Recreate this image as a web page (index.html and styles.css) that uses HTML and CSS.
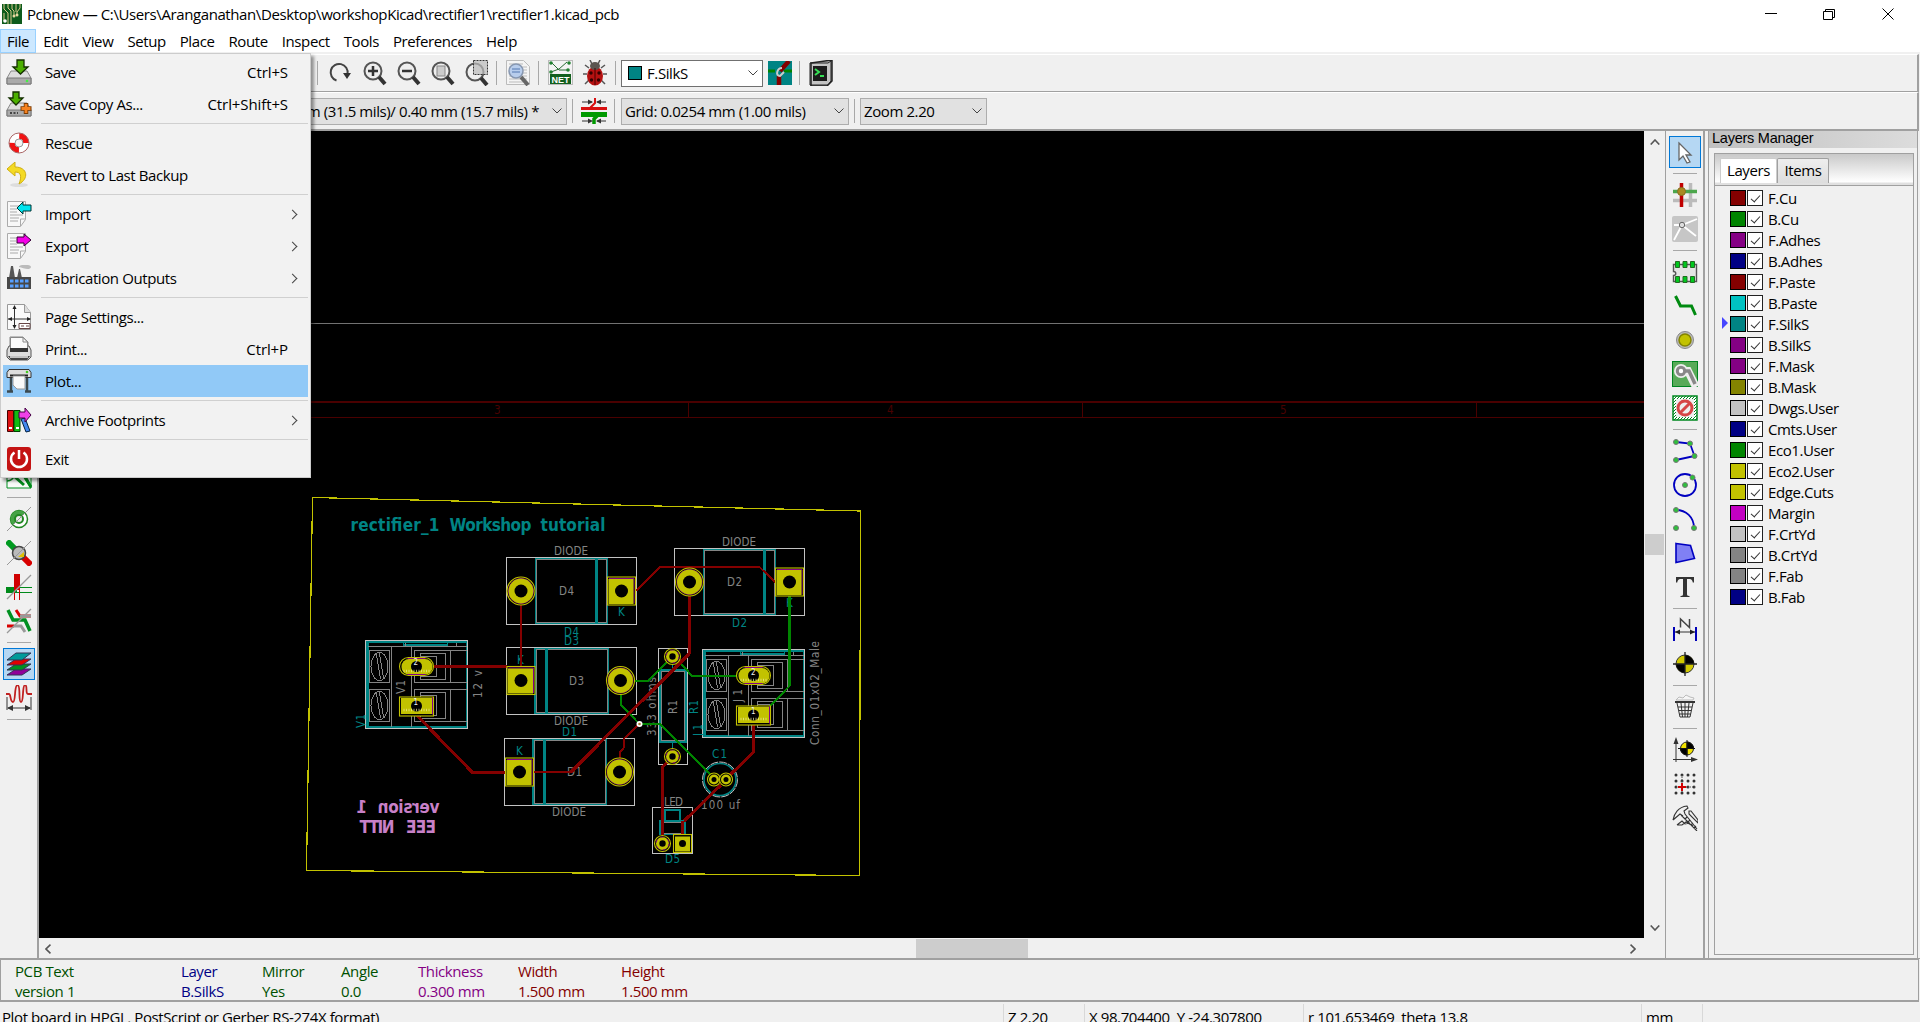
FILE: index.html
```html
<!DOCTYPE html>
<html lang="en">
<head>
<meta charset="utf-8">
<title>Pcbnew</title>
<link rel="stylesheet" href="styles.css">
</head>
<body>
<div class="window">
  <header class="titlebar">
    <svg class="app-icon" viewBox="0 0 20 20"><rect width="20" height="20" fill="#0d5b1c"/><path d="M2 0v5l4 4v11M6 0v4l3 3v13M10 0v5l2 2v4M14 0v8M18 0v4l-3 4v3M2 9v8" stroke="#d9c98c" fill="none"/><circle cx="3" cy="17" r="1.8" fill="#fff"/><circle cx="12" cy="12" r="1.5" fill="#e8d9a0"/><circle cx="15" cy="11" r="1.5" fill="#e8d9a0"/></svg>
    <span class="title-text">Pcbnew — C:\Users\Aranganathan\Desktop\workshopKicad\rectifier1\rectifier1.kicad_pcb</span>
    <svg class="win-controls" viewBox="0 0 140 28"><path d="M0 13.5h12M58.500 11.500h9v8h-9zM60.500 11.500v-2h9v8h-2M117.500 8.500l11 11M128.500 8.500l-11 11" stroke="#000" fill="none"/></svg>
  </header>
  <nav class="menubar">
    <span class="mb-item active">File</span><span class="mb-item">Edit</span><span class="mb-item">View</span><span class="mb-item">Setup</span><span class="mb-item">Place</span><span class="mb-item">Route</span><span class="mb-item">Inspect</span><span class="mb-item">Tools</span><span class="mb-item">Preferences</span><span class="mb-item">Help</span>
  </nav>

  <div class="toolbar top-main">
    <i class="vsep"></i>
    <svg class="ti" viewBox="0 0 26 26"><path d="M9.500 20.500A8.500 8.500 0 1 1 20.500 14" fill="none" stroke="#444" stroke-width="2"/><path d="M16 13h8l-4 6z" fill="#333"/></svg>
    <svg class="ti m9" viewBox="0 0 26 26"><circle cx="11" cy="11" r="8.500" fill="#eee" stroke="#555" stroke-width="2"/><path d="M17 17l6 7" stroke="#333" stroke-width="4"/><path d="M11 6v10M6 11h10" stroke="#333" stroke-width="2.500"/></svg>
    <svg class="ti m8" viewBox="0 0 26 26"><circle cx="11" cy="11" r="8.500" fill="#eee" stroke="#555" stroke-width="2"/><path d="M17 17l6 7" stroke="#333" stroke-width="4"/><path d="M6 11h10" stroke="#333" stroke-width="2.500"/></svg>
    <svg class="ti m8" viewBox="0 0 26 26"><circle cx="11" cy="11" r="8.500" fill="#eee" stroke="#555" stroke-width="2"/><path d="M17 17l6 7" stroke="#333" stroke-width="4"/><rect x="7" y="6" width="8" height="10" fill="#ccc" stroke="#888"/></svg>
    <svg class="ti m9" viewBox="0 0 26 26"><circle cx="10" cy="12" r="8.500" fill="#eee" stroke="#555" stroke-width="2"/><path d="M16 18l6 7" stroke="#333" stroke-width="4"/><rect x="8.500" y=".5" width="14" height="14" fill="#bbb" fill-opacity=".7" stroke="#333" stroke-dasharray="2 1"/></svg>
    <i class="vsep m5"></i>
    <svg class="ti m8" viewBox="0 0 26 26"><path d="M1.500 .5h17l6 6v18h-23z" fill="#f4f4f4" stroke="#bbb"/><path d="M4 4h14M4 7h18M4 10h18M4 13h18M4 16h18M4 19h18M4 22h14" stroke="#bbb"/><circle cx="11" cy="11" r="7" fill="#b8cdec" stroke="#8797b0" stroke-width="1.500"/><path d="M7 9h8M7 12h8" stroke="#5277b0"/><path d="M16 17l7 8" stroke="#666" stroke-width="4"/></svg>
    <i class="vsep m7"></i>
    <svg class="ti m9" viewBox="0 0 26 26"><rect x=".5" y=".5" width="24" height="24" fill="#f3f3f3" stroke="#bbb"/><path d="M3 2l8 8h8M3 12l8-3 8-7" stroke="#286b32" fill="none"/><g fill="#208030"><circle cx="3" cy="3" r="1.800"/><circle cx="3" cy="12" r="1.800"/><circle cx="21" cy="3" r="1.800"/><circle cx="20" cy="10" r="1.800"/></g><rect x="2" y="14" width="21" height="10" fill="#12601e"/><text x="3.500" y="22.500" class="net-label" textLength="18">NET</text></svg>
    <svg class="ti m8" viewBox="0 0 26 26"><path d="M7 8l-4-3M19 8l4-3M5 14H1M21 14h4M7 20l-4 4M19 20l4 4M10 4L8 0M16 4l2-4" stroke="#555" stroke-width="1.500"/><ellipse cx="13" cy="16" rx="8" ry="9.500" fill="#b51111"/><ellipse cx="13" cy="6" rx="5" ry="4" fill="#5a5550"/><path d="M13 8v17" stroke="#400"/><g fill="#300"><circle cx="9" cy="13" r="1.700"/><circle cx="17" cy="13" r="1.700"/><circle cx="9.500" cy="20" r="1.700"/><circle cx="16.500" cy="20" r="1.700"/></g></svg>
    <i class="vsep m7"></i>
    <div class="combo light layer-combo"><i class="layer-chip"></i><span>F.SilkS</span><svg class="arrow" viewBox="0 0 10 6"><path d="M.5 .5L5 5 9.500 .5" fill="none" stroke="#444"/></svg></div>
    <svg class="ti layer-pair" viewBox="0 0 24 24"><rect width="24" height="24" fill="#008484"/><path d="M0 10h7M16 10h8" stroke="#008400" stroke-width="3"/><path d="M21 0l-9 10" stroke="#840000" stroke-width="4.500"/><path d="M11 15v9" stroke="#840000" stroke-width="4.500"/><path d="M14 7c-5 0-7 8-2 8l4-4" stroke="#ccc" stroke-width="2" fill="none"/></svg>
    <i class="vsep m7"></i>
    <svg class="ti m9" viewBox="0 0 26 26"><path d="M2 3l21-3v21l-5 5H2z" fill="#c4c4c4" stroke="#222" stroke-width="1.500"/><path d="M1 3h18l3-2v20l-3 4H1z" fill="none" stroke="#222"/><path d="M4 6h14v15H4z" fill="#1c1c1c"/><path d="M6 9l4 3-4 3M11 16h4" stroke="#36e055" fill="none" stroke-width="2"/></svg>
  </div>
  <div class="toolbar top-options">
    <div class="combo track-combo"><span>m (31.5 mils)/ 0.40 mm (15.7 mils) *</span><svg class="arrow" viewBox="0 0 10 6"><path d="M.5 .5L5 5 9.500 .5" fill="none" stroke="#444"/></svg></div>
    <i class="vsep m5"></i>
    <svg class="ti m8" viewBox="0 0 26 26"><path d="M0 10.500h26" stroke="#d81111" stroke-width="3"/><path d="M0 16.500h26" stroke="#009a00" stroke-width="5"/><path d="M14 0v5l-5 5" stroke="#d81111" fill="none" stroke-width="2"/><path d="M13 26v-5l4-4" stroke="#009a00" fill="none" stroke-width="3.500"/><path d="M1 4h10M25 4h-9M1 23h9M25 23h-9" stroke="#333"/><path d="M7 1.500l5 2.500-5 2.500zM20 1.500l-5 2.500 5 2.500zM7 20.500l5 2.500-5 2.500zM20 20.500l-5 2.500 5 2.500z" fill="#333"/></svg>
    <i class="vsep m7"></i>
    <div class="combo grid-combo"><span>Grid: 0.0254 mm (1.00 mils)</span><svg class="arrow" viewBox="0 0 10 6"><path d="M.5 .5L5 5 9.500 .5" fill="none" stroke="#444"/></svg></div>
    <i class="vsep m5"></i>
    <div class="combo zoom-combo"><span>Zoom 2.20</span><svg class="arrow" viewBox="0 0 10 6"><path d="M.5 .5L5 5 9.500 .5" fill="none" stroke="#444"/></svg></div>
  </div>

  <div class="workspace">
    <aside class="side-tools left-tools">
      <div class="tool"><svg viewBox="0 0 26 26"><path d="M1 1h24v24H1z" fill="#f8fbf8" stroke="#009020"/><path d="M1 18c5 0 7-4 8-7h7l9 14" stroke="#008a1a" stroke-width="1.500" fill="none"/><path d="M9 14l9 8M18 12l7 12" stroke="#008a1a" stroke-width="3"/></svg></div>
      <i class="hsep"></i>
      <div class="tool"><svg viewBox="0 0 26 26"><circle cx="13" cy="13" r="8.500" fill="#fff" stroke="#228822" stroke-width="1.500"/><path d="M4.500 13a8.500 8.500 0 0 1 14.500-6L7 19a8 8 0 0 1-2.500-6z" fill="#46a346"/><circle cx="13" cy="13" r="4" fill="#eee" stroke="#228822" stroke-width="2"/><path d="M1 25L25 1" stroke="#999"/></svg></div>
      <div class="tool"><svg viewBox="0 0 26 26"><path d="M1 1l9 9" stroke="#009a20" stroke-width="6"/><path d="M16 16l9 9" stroke="#d80000" stroke-width="6"/><circle cx="13" cy="13" r="6.500" fill="#bbb" stroke="#444" stroke-width="1.500"/><path d="M12 17l6-5v5z" fill="#e0c000"/><path d="M1 25L25 1" stroke="#999"/></svg></div>
      <div class="tool"><svg viewBox="0 0 26 26"><path d="M0 16h11" stroke="#008a1a" stroke-width="6"/><path d="M11 13.500h15M11 18.500h15" stroke="#008a1a"/><path d="M11 0v16" stroke="#d00000" stroke-width="6"/><path d="M8.500 16v10M13.500 16v10" stroke="#d00000"/><path d="M1 25L25 1" stroke="#999" stroke-width="1.300"/></svg></div>
      <div class="tool"><svg viewBox="0 0 26 26"><path d="M10 2l4 6h11M1 18h7" stroke="#d80000" stroke-width="3" fill="none"/><path d="M14 8h11M8 18h7l4 6" stroke="#999" stroke-width="3" fill="none"/><path d="M2 2l5 10h12l5 11" stroke="#009020" stroke-width="3.500" fill="none"/><path d="M1 25L25 1" stroke="#999" stroke-width="1.300"/></svg></div>
      <i class="hsep"></i>
      <div class="tool on"><svg viewBox="0 0 26 26"><g stroke="#335" stroke-width="1"><path d="M1 24l9-6h15l-9 6z" fill="#90009a"/><path d="M1 19l9-6h15l-9 6z" fill="#009020"/><path d="M1 14l9-6h15l-9 6z" fill="#e00000"/><path d="M1 9l9-7h15l-9 7z" fill="#009a9a"/></g></svg></div>
      <div class="tool"><svg viewBox="0 0 26 26"><path d="M0 9h3c2 0 1 8 4 8s1-17 4.500-17S12 17 15 17s1-17 4-17 0 9 3 9h4" stroke="#c02020" fill="none" stroke-width="1.800"/><path d="M1 12v13M25 12v13M2 23h22" stroke="#333"/><path d="M1 23l6-3v6zM25 23l-6-3v6z" fill="#333"/></svg></div>
      <i class="hsep"></i>
    </aside>

    <main class="editor">
      <svg class="board" viewBox="39 131 1605 807" width="1605" height="807">
        <defs>
          <g id="pad-round"><circle r="14" class="y-line"/><circle r="12.500" class="m-line"/><circle r="12.500" class="y"/><circle r="6.500"/></g>
          <g id="pad-square"><rect x="-14" y="-14" width="28" height="28" class="y-line"/><path d="M-12.500 -12.500h25v25" class="m-line"/><rect x="-13" y="-12" width="25" height="25" class="y"/><circle r="6.500"/></g>
          <g id="pad-small"><circle r="8" class="y-line"/><circle r="6.500" class="y"/><circle r="6.500" class="m-line dash"/><circle r="3.200"/></g>
          <g id="diode-a" class="crisp"><rect width="130" height="67" class="crt"/><rect x="29" y="1" width="72" height="65" class="silk"/><rect x="30" y="2" width="70" height="63" class="fab"/><path d="M90 1v65" class="silk bar"/></g>
          <g id="diode-b" class="crisp"><rect width="129.500" height="67" class="crt"/><rect x="28.500" y="1" width="73" height="65" class="silk"/><rect x="29.500" y="2" width="71" height="63" class="fab"/><path d="M40 1v65" class="silk bar"/></g>
          <g id="terminal" class="crisp">
            <rect width="102" height="88" class="crt"/>
            <path d="M1 86V1.500H101V86.500H1zM38 1.500v3h44v-3M2.500 86V2.500" class="silk"/>
            <path d="M2 6h99M26 6v80M46 6v80M4 10h20v32h-20zM4 49h20v32h-20zM101 10H49v32h52M101 49H49v32h52M55 13h25v26h-25zM55 52h25v26h-25zM55 16h16v20h-16zM55 55h16v20h-16zM85 10v32M85 49v32M11 14l4 25M14 13l4 25M11 53l4 25M14 52l4 25M40 2v4M91 2v4" class="fab"/>
            <ellipse cx="14" cy="26" rx="8.500" ry="14" class="fab"/><ellipse cx="14" cy="65" rx="8.500" ry="14" class="fab"/>
          </g>
          <g id="terminal-pads">
            <rect x="34" y="17" width="34" height="18" rx="9" class="y-line"/><rect x="36" y="18.500" width="31" height="15.500" rx="7.500" class="y"/><path d="M42 18h18M42 34h18" class="m-line"/><circle cx="51" cy="26" r="5.500"/>
            <rect x="34" y="56.500" width="34" height="19" class="y-line"/><rect x="35.500" y="57.500" width="31" height="16" class="y"/><path d="M67 57v17" class="m-line"/><circle cx="51" cy="65.500" r="5.500"/>
            <path d="M38 30.500h26M38 69.500h26" class="netmark"/>
          </g>
        </defs>

        <g class="crisp">
          <path d="M38 323.500H1644" stroke="#727272"/>
          <path d="M38 402H1644" stroke="#4a0000" stroke-width="2"/><path d="M38 417.500H1644M688.500 402v15M1082.500 402v15M1476.500 402v15" stroke="#4a0000" fill="none"/>
        </g>
        <g class="frame-no"><text x="494" y="414">3</text><text x="887" y="414">4</text><text x="1280" y="414">5</text></g>

        <path d="M312.500 497.500L860.500 511 859.500 875.500 306.500 870.500z" class="edge crisp"/>

        <use href="#diode-a" x="506.500" y="557.500"/><use href="#diode-a" x="674.500" y="548.500"/>
        <use href="#diode-b" x="506.500" y="647.500"/><use href="#diode-b" x="504.500" y="738.500"/>
        <use href="#terminal" x="365.500" y="640.500"/><use href="#terminal" x="702.500" y="649.500"/>
        <g class="crisp">
          <rect x="658.500" y="648.500" width="29" height="116" class="crt"/><rect x="660" y="670" width="26" height="72" class="silk"/><rect x="661.500" y="671.500" width="23" height="69" class="fab"/><path d="M672.500 664v6M672.500 742v7" class="silk"/>
          <rect x="652.500" y="807.500" width="40" height="46" class="crt"/><rect x="665" y="810" width="15" height="11" class="silk"/><rect x="660" y="821" width="25" height="13.500" class="silk"/><path d="M661 822.500h23M661 833h23" class="fab"/>
        </g>
        <circle cx="720" cy="779.500" r="16" class="silk"/><circle cx="720" cy="779.500" r="17.500" class="crt dash4"/>

        <g class="gray-t">
          <text x="554" y="554.500" textLength="34">DIODE</text><text x="722" y="545.500" textLength="34">DIODE</text><text x="554" y="725" textLength="34">DIODE</text><text x="552" y="816" textLength="34">DIODE</text>
          <text x="559" y="595" textLength="15">D4</text><text x="569" y="685" textLength="15">D3</text><text x="567" y="776" textLength="15">D1</text><text x="727" y="586" textLength="15">D2</text>
          <text x="664" y="806" textLength="19">LED</text><text x="701" y="809" textLength="39">100 uf</text>
          <text transform="translate(482 698) rotate(-90)" textLength="28">12 v</text><text transform="translate(404.500 694) rotate(-90)" textLength="14">V1</text><text transform="translate(741.500 702) rotate(-90)" textLength="13">J1</text>
          <text transform="translate(677 714) rotate(-90)" textLength="14">R1</text><text transform="translate(655.500 736) rotate(-90)" textLength="59">333 ohms</text><text transform="translate(818.500 745) rotate(-90)" textLength="104">Conn_01x02_Male</text>
        </g>
        <g class="teal-t">
          <text x="564" y="636" textLength="15">D4</text><text x="564" y="645" textLength="15">D3</text><text x="562" y="736" textLength="15">D1</text><text x="732" y="627" textLength="15">D2</text>
          <text x="618" y="616">K</text><text x="517" y="664">K</text><text x="516" y="755">K</text><text x="786" y="607">K</text><text x="712" y="758" textLength="15">C1</text><text x="665" y="863" textLength="15">D5</text>
          <text transform="translate(365 728) rotate(-90)" textLength="14">V1</text><text transform="translate(702 736) rotate(-90)" textLength="12">J1</text><text transform="translate(698 714) rotate(-90)" textLength="14">R1</text>
          <g class="headline"><text x="350.500" y="531" textLength="89">rectifier_1</text><text x="449.500" y="531" textLength="82">Workshop</text><text x="540.500" y="531" textLength="65">tutorial</text></g>
        </g>
        <g class="pink-t" transform="scale(-1 1)"><text x="-439.500" y="813" textLength="62">version</text><text x="-367" y="813">1</text><text x="-436" y="832.500" textLength="30">EEE</text><text x="-394.500" y="832.500" textLength="35">NITT</text></g>

        <g class="bcu crisp"><path d="M635 681H648L669 660M621 694v11l18.500 19H660L713 777M678 660L692 676H738M769 707L789.500 686"/><path d="M789.500 596V686" class="thick"/></g>
        <g class="fcu crisp"><path d="M521 603V668M533 772H571L689 655M636 591L660 567H759.500L776 583M619.500 758V753L623.500 748V739L639.500 724"/><path d="M434 666.500H507M415.500 714L472 772H507M571 772L689.500 653V595M753.500 723V752L728 777M721 785L684 821M670 759L662.500 767V835M682.500 821V834" class="thick"/></g>

        <use href="#pad-round" x="521" y="591"/><use href="#pad-square" x="621.500" y="591"/>
        <use href="#pad-square" x="521" y="680.500"/><use href="#pad-round" x="620.500" y="680.500"/>
        <use href="#pad-square" x="519.500" y="772"/><use href="#pad-round" x="619.500" y="772"/>
        <use href="#pad-round" x="689.500" y="582"/><use href="#pad-square" x="789.500" y="582"/>
        <use href="#terminal-pads" x="365.500" y="640.500"/><use href="#terminal-pads" x="702.500" y="649.500"/>
        <g class="pad-t"><text x="413.500" y="665">2</text><text x="413.500" y="705">1</text><text x="751" y="675">2</text><text x="751" y="714">1</text></g>
        <use href="#pad-small" x="672.500" y="656.500"/><use href="#pad-small" x="672.500" y="756.500"/>
        <use href="#pad-small" x="662.500" y="843.500"/>
        <rect x="673.500" y="834.500" width="18" height="18" class="y-line"/><rect x="675" y="836.500" width="15" height="15" class="y"/><circle cx="682.500" cy="843.500" r="3.500"/>
        <circle cx="714" cy="779.500" r="6.500" class="y-line"/><circle cx="726" cy="779.500" r="6.500" class="y-line"/><circle cx="714" cy="779.500" r="5" class="y"/><circle cx="726" cy="779.500" r="5" class="y"/><circle cx="714" cy="779.500" r="2.500"/><circle cx="726" cy="779.500" r="2.500"/>
        <circle cx="639.500" cy="724" r="3" fill="#fff"/><circle cx="639.500" cy="724" r="1.300" fill="#a87a30"/>
      </svg>
      <div class="vscroll"><svg viewBox="0 0 10 6"><path d="M.7 5.500L5 1l4.300 4.500" /></svg><i class="thumb"></i><svg viewBox="0 0 10 6"><path d="M.7 .5L5 5 9.300 .5"/></svg></div>
      <div class="hscroll"><svg viewBox="0 0 6 10"><path d="M5.500 .7L1 5l4.500 4.300"/></svg><i class="thumb"></i><svg viewBox="0 0 6 10"><path d="M.5 .7L5 5 .5 9.300"/></svg></div>
    </main>

    <aside class="side-tools right-tools">
      <div class="tool on"><svg viewBox="0 0 26 26"><path d="M7 4l12 12h-5l4 7-3 1-4-7-4 4z" fill="#fff" stroke="#666" stroke-width="1.300"/></svg></div>
      <i class="hsep"></i>
      <div class="tool"><svg viewBox="0 0 26 26"><path d="M18.500 1v24M1 18.500h24" stroke="#bbb" stroke-width="3.500"/><path d="M1 9.500h24" stroke="#4ca64c" stroke-width="3.500"/><path d="M9.500 1v24" stroke="#c00000" stroke-width="3.500"/><circle cx="9.500" cy="9.500" r="4" fill="#a88a22" stroke="#876f22"/></svg></div>
      <div class="tool"><svg viewBox="0 0 26 26"><rect width="26" height="26" rx="2" fill="#c6c6c6"/><path d="M2 9l8 0L25 3M10 9L2 24M10 9l14 11" stroke="#fff" stroke-width="1.800" fill="none"/><circle cx="10" cy="9" r="2.700" fill="#ddd" stroke="#666"/></svg></div>
      <i class="hsep"></i>
      <div class="tool"><svg viewBox="0 0 26 26"><path d="M1.500 5.500h23v17h-23v-6c3 0 3-4 0-4z" fill="#e4e4e4" stroke="#555" stroke-width="1.400"/><path d="M3.500 2.500h4v6h-4zM11 2.500h4v6h-4zM18.500 2.500h4v6h-4zM3.500 17.500h4v6h-4zM11 17.500h4v6h-4zM18.500 17.500h4v6h-4z" fill="#00c81e" stroke="#226a22"/></svg></div>
      <div class="tool"><svg viewBox="0 0 26 26"><path d="M3.500 3l5 10h11l4 9" stroke="#008a10" stroke-width="3" fill="none"/></svg></div>
      <div class="tool"><svg viewBox="0 0 26 26"><circle cx="13" cy="13" r="8.500" fill="#bbb" stroke="#888"/><circle cx="13" cy="13" r="6" fill="#c2c200" stroke="#848400" stroke-width="1.500"/></svg></div>
      <div class="tool"><svg viewBox="0 0 26 26"><rect x=".5" y=".5" width="25" height="25" fill="#58aa58" stroke="#008420"/><path d="M9 10h7l8 16" stroke="#eee" stroke-width="8" fill="none"/><circle cx="9" cy="10" r="7" fill="#eee"/><path d="M13 10h4l6 13" stroke="#888" stroke-width="3.500" fill="none"/><circle cx="9" cy="10" r="3.700" fill="#fff" stroke="#888" stroke-width="3"/></svg></div>
      <div class="tool"><svg viewBox="0 0 26 26"><defs><pattern id="hatch" width="3" height="3" patternUnits="userSpaceOnUse"><path d="M0 3L3 0" stroke="#008820"/></pattern></defs><rect x="1" y="1" width="24" height="24" fill="#fff"/><rect x="1" y="1" width="24" height="24" fill="url(#hatch)" stroke="#008820" stroke-width="1.500"/><rect x="4" y="4" width="18" height="18" fill="#eee"/><circle cx="13" cy="13" r="7" fill="#eee" stroke="#d64646" stroke-width="3"/><path d="M18 8L8 18" stroke="#d64646" stroke-width="3"/></svg></div>
      <i class="hsep"></i>
      <div class="tool"><svg viewBox="0 0 26 26"><path d="M4 4l14 1.500 4.500 12.500L4 22" fill="none" stroke="#0000c0" stroke-width="1.800"/><g class="node"><circle cx="4" cy="4" r="2.500"/><circle cx="18" cy="5.500" r="2.500"/><circle cx="22.500" cy="18" r="2.500"/><circle cx="4" cy="22" r="2.500"/></g></svg></div>
      <div class="tool"><svg viewBox="0 0 26 26"><circle cx="13" cy="13" r="11" fill="none" stroke="#0000c0" stroke-width="1.800"/><g class="node"><circle cx="13" cy="13" r="2.500"/><circle cx="20.500" cy="5.500" r="2.500"/></g></svg></div>
      <div class="tool"><svg viewBox="0 0 26 26"><path d="M4 4c10 0 18 7 18 18" fill="none" stroke="#0000c0" stroke-width="1.800"/><g class="node"><circle cx="4" cy="4" r="2.500"/><circle cx="4" cy="22" r="2.500"/><circle cx="22" cy="22" r="2.500"/></g></svg></div>
      <div class="tool"><svg viewBox="0 0 26 26"><path d="M4 3.500l14.500 2L22.500 18.500 4 22.500z" fill="#8080f4" stroke="#0000c0" stroke-width="1.600"/></svg></div>
      <div class="tool"><svg viewBox="0 0 26 26"><path d="M4 3h18v5.500h-1.200q-.6-3.500-3-3.500H15v15.500q0 1.500 2.500 1.500v1h-9v-1q2.500 0 2.500-1.500V5H8.200q-2.400 0-3 3.500H4z" fill="#333"/></svg></div>
      <i class="hsep"></i>
      <div class="tool"><svg viewBox="0 0 26 26"><path d="M2 10v14M24 10v14" stroke="#0000b8" stroke-width="2"/><path d="M8.500 10.500V2l9 8.500V2" stroke="#444" fill="none" stroke-width="1.500"/><path d="M3 15h20" stroke="#333"/><path d="M3 15l5-2.500v5zM23 15l-5-2.500v5z" fill="#222"/></svg></div>
      <div class="tool"><svg viewBox="0 0 26 26"><circle cx="13" cy="13" r="9" fill="#d0c800" stroke="#333"/><path d="M13 13V4a9 9 0 0 1 9 9zM13 13v9a9 9 0 0 1-9-9z"/><path d="M13 1v24M1 13h24" stroke="#222" stroke-width="1.300"/></svg></div>
      <i class="hsep"></i>
      <div class="tool"><svg viewBox="0 0 26 26"><path d="M4 6l3-3 4 1 3-3 4 2 4 1-1 2z" fill="#f6f6f6" stroke="#bbb"/><path d="M3 8h20" stroke="#333" stroke-width="2"/><path d="M5 9l3 14h10l3-14M9 9l1.500 14M13 9v14M17 9l-1.500 14M6 13h14M7 16.500h12M7.500 20h11" stroke="#333" fill="none"/></svg></div>
      <i class="hsep"></i>
      <div class="tool"><svg viewBox="0 0 26 26"><path d="M4 25V3M1 22.500h23" stroke="#333"/><path d="M4 0l2.500 7h-5zM26 22.500l-7-2.500v5z" fill="#333"/><circle cx="15" cy="11.500" r="6.500" fill="#f0e000" stroke="#222"/><path d="M15 11.500V5a6.500 6.500 0 0 1 6.500 6.500zM15 11.500V18a6.500 6.500 0 0 1-6.500-6.500zM15 3v17M6 11.500h17" stroke="#111"/></svg></div>
      <div class="tool"><svg viewBox="0 0 26 26"><path d="M4 4h19M4 10h19M4 16h19M4 22h19" stroke="#333" stroke-width="3" stroke-linecap="round" stroke-dasharray="0 6"/><path d="M10 4v18M4 16h19" stroke="#555" stroke-dasharray="1 1"/><path d="M10 12v8M6 16h8" stroke="#d00000" stroke-width="2"/></svg></div>
      <div class="tool"><svg viewBox="0 0 26 26"><path d="M1 15C2 9 6 2 15 1l1 2-4 3 1 3 12 15M1 15l7-6 3 2M5 20l5-4 3 3 5-1M5 20h5l4-3 7 4M17 6l2 0 7 9v3l-9-9zM9 10l16 16M13 14l2-2M16 17l2-2M19 20l2-2M22 23l2-2" stroke="#333" stroke-width="1.100" fill="none"/></svg></div>
    </aside>

    <aside class="layers-pane">
      <div class="caption">Layers Manager</div>
      <div class="notebook">
        <div class="tabs"><span class="tab current">Layers</span><span class="tab">Items</span></div>
        <div class="layer-list">
          <div class="layer"><i class="sw" style="background:#840000"></i><b></b><span>F.Cu</span></div>
          <div class="layer"><i class="sw" style="background:#008400"></i><b></b><span>B.Cu</span></div>
          <div class="layer"><i class="sw" style="background:#840084"></i><b></b><span>F.Adhes</span></div>
          <div class="layer"><i class="sw" style="background:#000084"></i><b></b><span>B.Adhes</span></div>
          <div class="layer"><i class="sw" style="background:#840000"></i><b></b><span>F.Paste</span></div>
          <div class="layer"><i class="sw" style="background:#00c2c2"></i><b></b><span>B.Paste</span></div>
          <div class="layer selected"><i class="sw" style="background:#008484"></i><b></b><span>F.SilkS</span></div>
          <div class="layer"><i class="sw" style="background:#840084"></i><b></b><span>B.SilkS</span></div>
          <div class="layer"><i class="sw" style="background:#840084"></i><b></b><span>F.Mask</span></div>
          <div class="layer"><i class="sw" style="background:#848400"></i><b></b><span>B.Mask</span></div>
          <div class="layer"><i class="sw" style="background:#c2c2c2"></i><b></b><span>Dwgs.User</span></div>
          <div class="layer"><i class="sw" style="background:#000084"></i><b></b><span>Cmts.User</span></div>
          <div class="layer"><i class="sw" style="background:#008400"></i><b></b><span>Eco1.User</span></div>
          <div class="layer"><i class="sw" style="background:#c2c200"></i><b></b><span>Eco2.User</span></div>
          <div class="layer"><i class="sw" style="background:#c2c200"></i><b></b><span>Edge.Cuts</span></div>
          <div class="layer"><i class="sw" style="background:#c200c2"></i><b></b><span>Margin</span></div>
          <div class="layer"><i class="sw" style="background:#c2c2c2"></i><b></b><span>F.CrtYd</span></div>
          <div class="layer"><i class="sw" style="background:#848484"></i><b></b><span>B.CrtYd</span></div>
          <div class="layer"><i class="sw" style="background:#848484"></i><b></b><span>F.Fab</span></div>
          <div class="layer"><i class="sw" style="background:#000084"></i><b></b><span>B.Fab</span></div>
        </div>
      </div>
    </aside>
  </div>

  <section class="msg-panel">
    <div class="msg c-green"><span>PCB Text</span><span>version 1</span></div>
    <div class="msg c-blue"><span>Layer</span><span>B.SilkS</span></div>
    <div class="msg c-green"><span>Mirror</span><span>Yes</span></div>
    <div class="msg c-green"><span>Angle</span><span>0.0</span></div>
    <div class="msg c-purple"><span>Thickness</span><span>0.300 mm</span></div>
    <div class="msg c-red"><span>Width</span><span>1.500 mm</span></div>
    <div class="msg c-red"><span>Height</span><span>1.500 mm</span></div>
  </section>
  <footer class="statusbar">
    <span>Plot board in HPGL, PostScript or Gerber RS-274X format)</span><span>Z 2.20</span><span>X 98.704400&nbsp; Y -24.307800</span><span>r 101.653469&nbsp; theta 13.8</span><span>mm</span><span></span>
  </footer>

  <div class="menu">
    <div class="mi"><svg viewBox="0 0 26 26"><path d="M5 12h16l4 7v6H1v-6z" fill="#ddd" stroke="#888"/><path d="M1 19h24v6H1z" fill="#aaa" stroke="#777"/><circle cx="21" cy="22" r="1.300" fill="#4e4"/><path d="M11 1h7v7h4l-7.500 7L7 8h4z" fill="#4cb000" stroke="#143000" stroke-width="1.300"/></svg><span>Save</span><kbd>Ctrl+S</kbd></div>
    <div class="mi"><svg viewBox="0 0 26 26"><path d="M5 12h16l4 7v6H1v-6z" fill="#ddd" stroke="#888"/><path d="M1 19h24v6H1z" fill="#aaa" stroke="#777"/><path d="M4 22h8" stroke="#444" stroke-width="2" stroke-dasharray="2 1.500"/><path d="M7 1h6v6h4l-7 7-7-7h4z" fill="#4cb000" stroke="#143000" stroke-width="1.300"/><path d="M20 12v11M14.500 17.500h11" stroke="#7a3a00" stroke-width="4.500"/><path d="M20 13v9M15.500 17.500h9" stroke="#f58220" stroke-width="2.800"/></svg><span>Save Copy As...</span><kbd>Ctrl+Shift+S</kbd></div>
    <i class="line"></i>
    <div class="mi"><svg viewBox="0 0 26 26"><circle cx="13" cy="13" r="7" fill="none" stroke="#fff" stroke-width="6"/><circle cx="13" cy="13" r="7" fill="none" stroke="#f01414" stroke-width="6" stroke-dasharray="11 11" stroke-dashoffset="-11"/><circle cx="13" cy="13" r="10" fill="none" stroke="#a66"/><circle cx="13" cy="13" r="4" fill="#f2f2f2" stroke="#999"/></svg><span>Rescue</span></div>
    <div class="mi"><svg viewBox="0 0 26 26"><ellipse cx="13" cy="23" rx="9" ry="2" fill="#ddd"/><path d="M9 0L1 7l8 7v-4c6 0 7 4 4 12 10-5 9-17-4-17z" fill="#f4da24" stroke="#cfae10"/></svg><span>Revert to Last Backup</span></div>
    <i class="line"></i>
    <div class="mi"><svg viewBox="0 0 26 26"><path d="M1.500 .5h18v18l-5 7h-13z" fill="#f8f8f8" stroke="#aaa"/><path d="M4 5h9M4 8h7M4 11h7M4 14h13M4 17h9M4 20h8M14.500 25v-7h5" stroke="#aaa" fill="none"/><path d="M17 1v3h8v6h-8v3l-6-6z" fill="#00e4ee" stroke="#033"/></svg><span>Import</span><em></em></div>
    <div class="mi"><svg viewBox="0 0 26 26"><path d="M1.500 .5h18v18l-5 7h-13z" fill="#f8f8f8" stroke="#aaa"/><path d="M4 5h6M4 8h6M4 11h7M4 14h13M4 17h9M4 20h8M14.500 25v-7h5" stroke="#aaa" fill="none"/><path d="M18 1v3h-7v6h7v3l7-6z" fill="#f400e8" stroke="#303"/></svg><span>Export</span><em></em></div>
    <div class="mi"><svg viewBox="0 0 26 26"><path d="M3 13L5 1h2l2 12zM11 13l2-9h1l2 9z" fill="#555"/><path d="M13 2c0-3 12-3 12 0-1 4-8 1-12 0z" fill="#bbb"/><path d="M1 12h24v12H1z" fill="#484848"/><path d="M4 16h19M4 21h19" stroke="#58a0ff" stroke-width="3" stroke-dasharray="3.500 1.500"/></svg><span>Fabrication Outputs</span><em></em></div>
    <i class="line"></i>
    <div class="mi"><svg viewBox="0 0 26 26"><path d="M1.500 .5h17l6 8v17h-23z" fill="#fafafa" stroke="#999"/><path d="M18.500 .5v8h6" stroke="#999" fill="#ddd"/><path d="M8.500 2v22M2 15h22" stroke="#333"/><path d="M8.500 1l2 4h-4zM8.500 25l2-4h-4zM2 15l4-2v4zM25 15l-4-2v4z" fill="#222"/><path d="M13 19.500h11v5H13zM15 22h3M20 22h3" fill="#fff" stroke="#644"/></svg><span>Page Settings...</span></div>
    <div class="mi"><svg viewBox="0 0 26 26"><path d="M4 13V1h13l5 5v7z" fill="#fafafa" stroke="#888"/><path d="M3 10L1 14v7l3 3h18l3-3v-7l-2-4z" fill="#ddd" stroke="#555"/><path d="M4.500 13V1.500h12.500l4.500 4.500v7z" fill="#fafafa" stroke="#888"/><path d="M17 1.500v4.500h4.500" fill="none" stroke="#888"/><path d="M4 12h18v4H4z" fill="#333"/><path d="M2 20h22l-3 4H5z" fill="#444"/><path d="M4 21h18" stroke="#eee" stroke-width="1.500"/></svg><span>Print...</span><kbd>Ctrl+P</kbd></div>
    <div class="mi hot"><svg viewBox="0 0 26 26"><path d="M5 7v16M21 7v16M1 23.500h6M19 23.500h6" stroke="#3c4a50" stroke-width="2.500"/><path d="M3 1.500h20l2 3v5H1v-5z" fill="#ddd" stroke="#333"/><path d="M4 7.500h18" stroke="#222" stroke-width="2"/><path d="M7 8h12v13h-8l-4-4z" fill="#fafafa" stroke="#999"/><circle cx="21" cy="4" r="1.300" fill="#4c2"/></svg><span>Plot...</span></div>
    <i class="line"></i>
    <div class="mi"><svg viewBox="0 0 26 26"><path d="M1.500 3.500h6v21h-6z" fill="#d11" stroke="#400"/><path d="M8 3.500h6v21H8z" fill="#1b1" stroke="#040"/><path d="M15 12l4-1 5 13-4 1z" fill="#48e" stroke="#024"/><path d="M3 21h3M10 21h3" stroke="#fff" stroke-width="2"/><path d="M19 1v4h-6v6h6v4l6-7z" fill="#f040e8" stroke="#404"/></svg><span>Archive Footprints</span><em></em></div>
    <i class="line"></i>
    <div class="mi"><svg viewBox="0 0 26 26"><rect x="1" y="1" width="24" height="24" rx="3" fill="#c41414"/><path d="M8.500 6.500a8 8 0 1 0 9 0" fill="none" stroke="#fff" stroke-width="2.500"/><path d="M13 4v9" stroke="#fff" stroke-width="2.500"/></svg><span>Exit</span></div>
  </div>
</div>
</body>
</html>
```
FILE: styles.css
```css
* { box-sizing: border-box; }
body { margin: 0; width: 1920px; height: 1022px; overflow: hidden; background: #f0f0f0; color: #000;
  font: 15px/20px "Open Sans", "Noto Sans", sans-serif; font-stretch: 93%; letter-spacing: -0.4px; white-space: nowrap; }
i, em, b, kbd { font: inherit; display: block; }
svg { display: block; flex: none; }

.window { position: relative; width: 1920px; height: 1022px; display: flex; flex-direction: column; overflow: hidden; }
.titlebar { height: 28px; flex: none; background: #fff; display: flex; align-items: center; padding-left: 2px; }
.app-icon { width: 20px; height: 20px; margin-right: 5px; }
.title-text { flex: 1; }
.win-controls { width: 140px; height: 28px; margin-right: 15px; }
.menubar { height: 26px; flex: none; background: #fff; display: flex; border-bottom: 2px solid #f0f0f0; padding-top: 1px; }
.mb-item { height: 24px; border: 1px solid transparent; padding: 1px 6px; }
.mb-item.active { background: #cce8ff; border-color: #99d1ff; }

.toolbar { flex: none; display: flex; align-items: center; border-right: 2px solid #a0a0a0; background: #f0f0f0; margin-right: 1px; }
.top-main { height: 38px; border-bottom: 1px solid #a0a0a0; border-top: 1px solid #fff; padding-left: 317px; }
.top-options { height: 39px; border-bottom: 2px solid #a0a0a0; border-top: 1px solid #fff; }
.vsep { width: 1px; height: 24px; background: #a8a8a8; flex: none; }
.ti { width: 26px; height: 26px; }
.top-main .vsep:first-child { margin-right: 9px; }
.m5 { margin-left: 5px; } .m7 { margin-left: 7px; } .m8 { margin-left: 8px; } .m9 { margin-left: 9px; }
.net-label { font: bold 9px "Liberation Sans", sans-serif; fill: #fff; letter-spacing: 0; }
.combo { height: 27px; flex: none; background: #e1e1e1; border: 1px solid #adadad; display: flex; align-items: center; padding: 0 4px 0 3px; }
.combo span { flex: 1; }
.combo.light { background: #fff; border-color: #707070; }
.arrow { width: 10px; height: 6px; }
.layer-combo { width: 142px; margin-left: 5px; padding-left: 6px; }
.layer-chip { width: 14px; height: 14px; background: #008484; border: 1px solid #000; margin-right: 5px; }
.layer-pair { width: 24px; height: 24px; margin-left: 5px; }
.track-combo { width: 367px; margin-left: 200px; }
.track-combo span { text-align: right; padding-right: 13px; }
.grid-combo { width: 228px; margin-left: 6px; }
.zoom-combo { width: 127px; margin-left: 5px; }

.workspace { height: 828px; flex: none; display: flex; border-bottom: 1px solid #a0a0a0; }
.side-tools { display: flex; flex-direction: column; align-items: center; flex: none; background: #f0f0f0; }
.left-tools { width: 39px; padding-top: 328px; padding-left: 1px; border-right: 2px solid #a0a0a0; }
.right-tools { width: 40px; padding-top: 4px; border-left: 1px solid #a0a0a0; border-right: 2px solid #a0a0a0; margin-right: 3px; }
.tool { width: 32px; height: 32px; margin: 1px 0; border: 1px solid transparent; padding: 2px; flex: none; }
.tool svg { width: 26px; height: 26px; }
.tool.on { background: #b5d7f3; border-color: #0078d7; }
.hsep { width: 24px; height: 1px; margin: 4px 0; background: #a8a8a8; flex: none; }
.node { fill: #2dc03c; stroke: #777; }

.editor { width: 1626px; flex: none; display: grid; grid-template: 807px 20px / 1605px 21px; }
.board { background: #000; grid-column: 1; grid-row: 1; }
.vscroll { grid-column: 2; display: flex; flex-direction: column; align-items: center; padding: 8px 0 7px; }
.vscroll svg { width: 10px; height: 6px; }
.vscroll .thumb { width: 19px; height: 21px; margin: 389px 0 auto; background: #cdcdcd; }
.hscroll { grid-column: 1; display: flex; align-items: center; padding: 1px 8px 0 6px; }
.hscroll svg { width: 6px; height: 10px; }
.hscroll .thumb { width: 112px; height: 19px; margin: 0 auto 0 865px; background: #cdcdcd; }
.vscroll path, .hscroll path { fill: none; stroke: #555; stroke-width: 1.600; }

.crisp { shape-rendering: crispEdges; }
.crt { fill: none; stroke: #c2c2c2; }
.silk { fill: none; stroke: #008484; stroke-width: 1.600; }
.bar { stroke-width: 3; }
.fab { fill: none; stroke: #848484; }
.edge { fill: none; stroke: #c2c200; stroke-width: 1.200; }
.y { fill: #c2c200; }
.y-line { fill: #000; stroke: #c2c200; stroke-width: 1.100; }
.m-line { fill: none; stroke: #840084; }
.dash { stroke-dasharray: 3 4; }
.dash4 { stroke-dasharray: 8 1; }
.netmark { stroke: #eee9a0; stroke-width: 2.500; stroke-dasharray: 1 1.500; fill: none; opacity: .7; }
.bcu { fill: none; stroke: #008400; stroke-width: 2; }
.fcu { fill: none; stroke: #840000; stroke-width: 2; }
.fcu .thick, .bcu .thick { stroke-width: 3; }
.board text { font-family: "DejaVu Sans Condensed", "DejaVu Sans", sans-serif; font-size: 11.500px; font-weight: 400; letter-spacing: 0; font-stretch: condensed; }
.gray-t { fill: #848484; }
.teal-t { fill: #008484; }
.board .headline text { font-size: 17px; font-weight: 700; }
.board .pink-t text { fill: #c880c8; font-size: 17px; font-weight: 700; }
.frame-no { fill: #4a0000; }
.board .pad-t text { fill: #eee; font-size: 8px; }

.layers-pane { width: 210px; flex: none; border-right: 1px solid #a0a0a0; border-left: 1px solid #a0a0a0; }
.caption { height: 17px; padding-left: 3px; font: 14.500px/15px "Liberation Sans", Arial, sans-serif; letter-spacing: -0.25px; background: linear-gradient(90deg, #c0c0c0, #dcdcdc); }
.notebook { width: 200px; height: 802px; margin: 5px 0 0 5px; border: 1px solid #a0a0a0; background: #f0f0f0; }
.tabs { height: 32px; display: flex; align-items: flex-start; padding: 4px 0 0 5px; background: linear-gradient(#c9c9c9, #fff 28px, #e0e0e0 29px); border-bottom: 1px solid #a0a0a0; }
.tab { height: 25px; width: 52px; text-align: center; border: 1px solid #a0a0a0; border-bottom: 0; border-radius: 2px 2px 0 0; padding-top: 1px; background: linear-gradient(#eee, #ddd); }
.tab.current { width: 57px; background: #fff; border-color: #ccc; }
.layer-list { padding-left: 15px; padding-top: 1px; }
.layer { position: relative; height: 21px; display: flex; align-items: center; }
.sw { width: 16px; height: 16px; border: 1px solid #000; margin-right: 1px; }
.layer b { width: 16px; height: 16px; border: 1px solid #222; background: #fff; margin-right: 5px; padding: 2px 0 0 5px; }
.layer b::before { content: ""; display: block; width: 4px; height: 8px; border: solid #333; border-width: 0 1.500px 1.500px 0; transform: rotate(42deg); }
.layer.selected::before { content: ""; position: absolute; left: -8px; top: 4px; border: 6px solid transparent; border-left-color: #4646ff; border-right: 0; }

.msg-panel { height: 43px; flex: none; margin-right: 1px; display: grid; grid-template-columns: 166px 81px 79px 77px 100px 103px 100px; border: 1px solid #a0a0a0; border-bottom-width: 2px; padding: 1px 0 0 14px; }
.msg { display: flex; flex-direction: column; }
.c-green { color: #005000; } .c-blue { color: #000084; } .c-purple { color: #840084; } .c-red { color: #840000; }
.statusbar { flex: 1; display: grid; grid-template-columns: 1003px 81px 219px 338px 61px 1fr; padding-top: 2px; }
.statusbar span { padding: 3px 0 0 4px; border-left: 1px solid #d8d8d8; height: 26px; }
.statusbar span:first-child { padding-left: 2px; border-left: 0; }

.menu { position: absolute; left: 0; top: 53px; width: 311px; height: 425px; background: #f2f2f2; border: 1px solid #ccc; padding: 2px; box-shadow: 3px 3px 3px rgba(0,0,0,.4); }
.mi { height: 32px; display: flex; align-items: center; padding: 0 20px 0 3px; }
.mi svg { width: 26px; height: 26px; margin-right: 13px; }
.mi span { flex: 1; }
.mi kbd { letter-spacing: -0.1px; }
.mi em { width: 7px; height: 7px; border: solid #444; border-width: 1.500px 1.500px 0 0; transform: rotate(45deg); margin-right: -8px; }
.mi.hot { background: #91c9f7; }
.menu .line { height: 1px; margin: 3px 0 3px 38px; background: #d0d0d0; }
```
